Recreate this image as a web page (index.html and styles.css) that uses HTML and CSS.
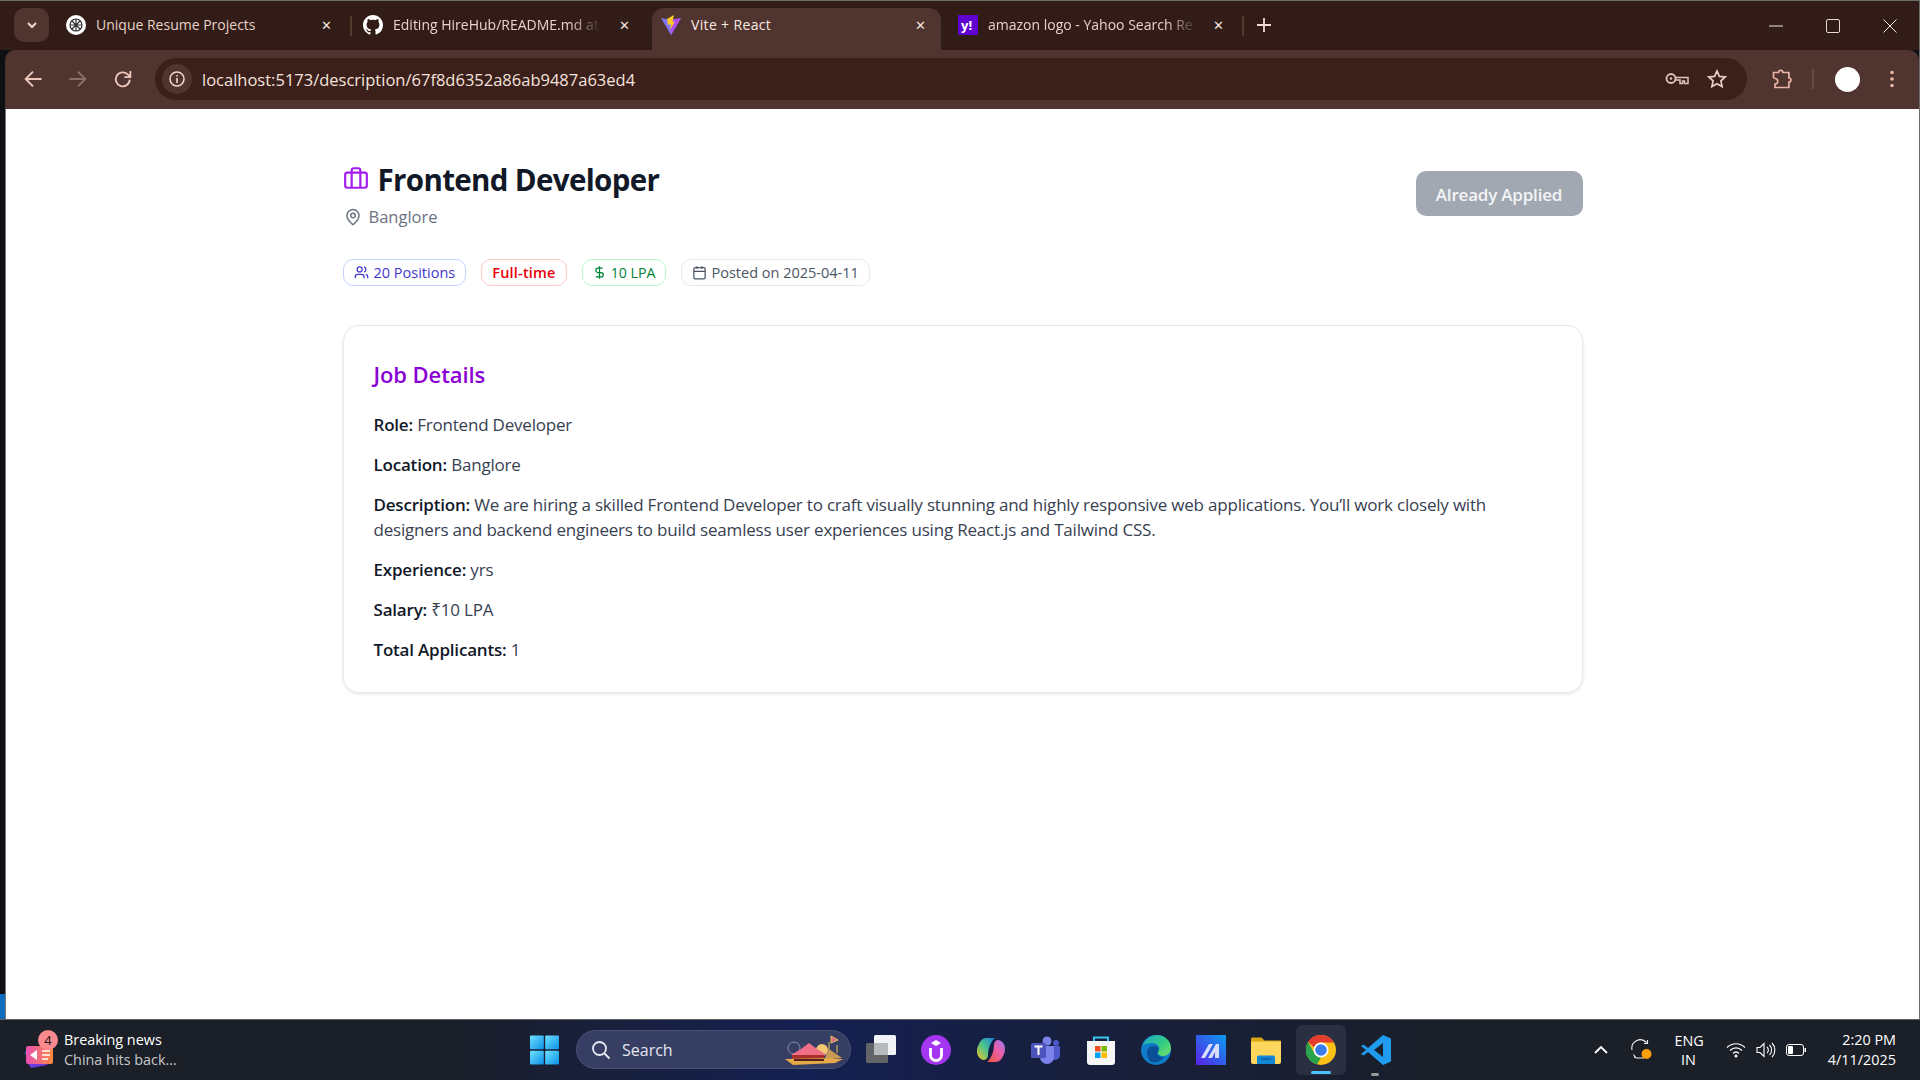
FILE: index.html
```html
<!DOCTYPE html>
<html lang="en">
<head>
<meta charset="utf-8">
<title>Vite + React</title>
<link rel="stylesheet" href="styles.css">
</head>
<body>
<div class="window">
  <header class="tabstrip">
    <button class="tab-menu"><svg width="14" height="14" viewBox="0 0 14 14"><path d="M3 5l4 4 4-4" fill="none" stroke="#f3d9d0" stroke-width="2"/></svg></button>
    <div class="tab tab-1">
      <svg class="fav" viewBox="0 0 20 20"><circle cx="10" cy="10" r="10" fill="#fff"/><g fill="none" stroke="#333" stroke-width="1.2"><circle cx="10" cy="10" r="6"/><path d="M6 6l8 8M14 6l-8 8M10 4v12M4 10h12"/></g></svg>
      <span class="tab-title">Unique Resume Projects</span>
      <span class="tab-x">✕</span>
    </div>
    <i class="tab-sep"></i>
    <div class="tab tab-2">
      <svg class="fav" viewBox="0 0 16 16"><path fill="#fff" d="M8 0C3.58 0 0 3.58 0 8c0 3.54 2.29 6.53 5.47 7.59.4.07.55-.17.55-.38 0-.19-.01-.82-.01-1.49-2.01.37-2.53-.49-2.69-.94-.09-.23-.48-.94-.82-1.13-.28-.15-.68-.52-.01-.53.63-.01 1.08.58 1.23.82.72 1.21 1.87.87 2.33.66.07-.52.28-.87.51-1.07-1.78-.2-3.64-.89-3.64-3.95 0-.87.31-1.59.82-2.15-.08-.2-.36-1.02.08-2.12 0 0 .67-.21 2.2.82.64-.18 1.32-.27 2-.27s1.36.09 2 .27c1.53-1.04 2.2-.82 2.2-.82.44 1.1.16 1.92.08 2.12.51.56.82 1.27.82 2.15 0 3.07-1.87 3.75-3.65 3.95.29.25.54.73.54 1.48 0 1.07-.01 1.93-.01 2.2 0 .21.15.46.55.38A8.01 8.01 0 0 0 16 8c0-4.42-3.58-8-8-8z"/></svg>
      <span class="tab-title fade">Editing HireHub/README.md at</span>
      <span class="tab-x">✕</span>
    </div>
    <div class="tab tab-active">
      <svg class="fav" viewBox="0 0 20 20"><path fill="#7f78f6" d="M0 3l10 2 10-2-10 17z"/><path fill="#b14cf0" d="M10 5l10-2-10 17z"/><path fill="#ffc927" d="M6 4l7-4-1.500 7L14 6.500 9 15l1-6-3 1z"/></svg>
      <span class="tab-title">Vite + React</span>
      <span class="tab-x">✕</span>
    </div>
    <div class="tab tab-4">
      <svg class="fav" viewBox="0 0 20 20"><rect width="20" height="20" fill="#5f01d1"/><text x="3" y="14.500" class="yahoo">y!</text></svg>
      <span class="tab-title fade">amazon logo - Yahoo Search Re</span>
      <span class="tab-x">✕</span>
    </div>
    <i class="tab-sep sep-last"></i>
    <svg class="plus" width="16" height="16" viewBox="0 0 16 16"><path d="M8 1v14M1 8h14" stroke="#f3d9d0" stroke-width="1.800"/></svg>
    <div class="win-ctrl">
      <svg width="14" height="14" viewBox="0 0 14 14"><path d="M0 7h14" stroke="#f5ebe6" stroke-width="1"/></svg>
      <svg width="14" height="14" viewBox="0 0 14 14"><rect x=".5" y=".5" width="13" height="13" rx="1.500" fill="none" stroke="#e7d8d2"/></svg>
      <svg width="14" height="14" viewBox="0 0 14 14"><path d="M.5.500l13 13M13.500.500l-13 13" stroke="#f5ebe6"/></svg>
    </div>
  </header>

  <nav class="toolbar">
    <svg class="nav-ic" viewBox="0 0 18 18"><path d="M16 9H3M9 3L3 9l6 6" fill="none" stroke="#ecc8bc" stroke-width="1.600"/></svg>
    <svg class="nav-ic nav-off" viewBox="0 0 18 18"><path d="M2 9h13M9 3l6 6-6 6" fill="none" stroke="#8c6e66" stroke-width="1.600"/></svg>
    <svg class="nav-ic" viewBox="0 0 18 18"><path d="M14.500 9.500a5.700 5.700 0 1 1-1.700-4.300L15 7.200M15 2.500v4.900h-4.900" fill="none" stroke="#ecc8bc" stroke-width="1.500"/></svg>
    <div class="omnibox">
      <span class="site-info"><svg width="18" height="18" viewBox="0 0 18 18"><circle cx="9" cy="9" r="7" fill="none" stroke="#f3d9d0" stroke-width="1.500"/><path d="M9 8v5M9 5v1.600" stroke="#f3d9d0" stroke-width="1.600"/></svg></span>
      <span class="url">localhost:5173/description/67f8d6352a86ab9487a63ed4</span>
      <svg class="omni-key" width="24" height="14" viewBox="0 0 24 14"><circle cx="6" cy="6.500" r="4.500" fill="none" stroke="#ddc5bc" stroke-width="1.800"/><circle cx="6" cy="6.500" r="1.300" fill="#ddc5bc"/><path d="M10.500 5.500H23v6h-3.500V9h-2v2.500H15V8h-4.500" fill="none" stroke="#ddc5bc" stroke-width="1.500"/></svg>
      <svg class="omni-star" width="20" height="20" viewBox="0 0 20 20"><path d="M10 2l2.400 5.400 5.800.600-4.300 3.900 1.200 5.700L10 14.700l-5.100 2.900 1.200-5.700L1.800 8l5.800-.6z" fill="none" stroke="#e6d0c7" stroke-width="1.700"/></svg>
    </div>
    <svg class="ext" width="20" height="20" viewBox="0 0 20 20"><path d="M1.500 3.500h5a2.200 2.200 0 0 1 4.400 0h6v5.500a2 2 0 0 1 0 4v5.500H3v-3.500a2.500 2.500 0 0 0 0-5.500l-1.500-1z" fill="none" stroke="#e9b4a6" stroke-width="1.700"/></svg>
    <i class="tool-sep"></i>
    <span class="avatar"></span>
    <svg class="dots" width="6" height="18" viewBox="0 0 6 18"><circle cx="3" cy="2.500" r="1.800" fill="#e9b4a6"/><circle cx="3" cy="9" r="1.800" fill="#e9b4a6"/><circle cx="3" cy="15.500" r="1.800" fill="#e9b4a6"/></svg>
  </nav>

  <main class="page">
    <div class="container">
      <div class="head">
        <div>
          <h1 class="title">
            <svg class="brief" width="26" height="26" viewBox="0 0 24 24"><path d="M8 21V5a2 2 0 0 1 2-2h4a2 2 0 0 1 2 2v16" fill="none" stroke="#a21ff0" stroke-width="2"/><rect x="2" y="7" width="20" height="14" rx="2" fill="none" stroke="#a21ff0" stroke-width="2"/></svg>
            Frontend Developer
          </h1>
          <p class="loc"><svg width="18" height="18" viewBox="0 0 24 24"><path d="M20 10c0 5-5.500 10.200-7.400 11.800a1 1 0 0 1-1.200 0C9.500 20.200 4 15 4 10a8 8 0 0 1 16 0" fill="none" stroke="#6b7280" stroke-width="2"/><circle cx="12" cy="10" r="3" fill="none" stroke="#6b7280" stroke-width="2"/></svg>Banglore</p>
        </div>
        <button class="applied">Already Applied</button>
      </div>
      <div class="chips">
        <span class="chip chip-blue"><svg width="15" height="15" viewBox="0 0 24 24"><g fill="none" stroke="currentColor" stroke-width="2"><path d="M16 21v-2a4 4 0 0 0-4-4H6a4 4 0 0 0-4 4v2"/><circle cx="9" cy="7" r="4"/><path d="M22 21v-2a4 4 0 0 0-3-3.870M16 3.130a4 4 0 0 1 0 7.750"/></g></svg>20 Positions</span>
        <span class="chip chip-red">Full-time</span>
        <span class="chip chip-green"><svg width="15" height="15" viewBox="0 0 24 24"><path d="M12 2v20M17 5H9.500a3.500 3.500 0 0 0 0 7h5a3.500 3.500 0 0 1 0 7H6" fill="none" stroke="currentColor" stroke-width="2"/></svg>10 LPA</span>
        <span class="chip chip-gray"><svg width="15" height="15" viewBox="0 0 24 24"><g fill="none" stroke="currentColor" stroke-width="2"><path d="M8 2v4M16 2v4M3 10h18"/><rect x="3" y="4" width="18" height="18" rx="2"/></g></svg>Posted on 2025-04-11</span>
      </div>
      <section class="card">
        <h2 class="card-title">Job Details</h2>
        <p><b>Role:</b> Frontend Developer</p>
        <p><b>Location:</b> Banglore</p>
        <p><b>Description:</b> We are hiring a skilled Frontend Developer to craft visually stunning and highly responsive web applications. You’ll work closely with designers and backend engineers to build seamless user experiences using React.js and Tailwind CSS.</p>
        <p><b>Experience:</b> yrs</p>
        <p><b>Salary:</b> ₹10 LPA</p>
        <p><b>Total Applicants:</b> 1</p>
      </section>
    </div>
  </main>

  <footer class="taskbar">
    <div class="news">
      <span class="news-icon">
        <svg width="30" height="30" viewBox="0 0 30 30"><path d="M2 24l24-2-4 5-16 3z" fill="#6e3be0"/><path d="M0 14l3-3v14z" fill="#3b6fe0"/><rect x="1" y="8" width="27" height="18" rx="2" fill="url(#ng)"/><path d="M5 17l7-5v10z" fill="#fff"/><path d="M17 13h8M17 17h8M17 21h6" stroke="#fff" stroke-width="1.500"/><defs><linearGradient id="ng" x1="0" x2="1"><stop offset="0" stop-color="#e94fb5"/><stop offset="1" stop-color="#fb8a3e"/></linearGradient></defs></svg>
        <span class="badge">4</span>
      </span>
      <div class="news-text"><div>Breaking news</div><div class="news-sub">China hits back...</div></div>
    </div>
    <div class="center">
      <svg class="ti win" viewBox="0 0 30 30"><g fill="url(#wg)"><rect width="14.300" height="14.300" rx="1"/><rect x="15.700" width="14.300" height="14.300" rx="1"/><rect y="15.700" width="14.300" height="14.300" rx="1"/><rect x="15.700" y="15.700" width="14.300" height="14.300" rx="1"/></g><defs><linearGradient id="wg" x1="0" y1="0" x2="1" y2="1"><stop offset="0" stop-color="#6fe3ff"/><stop offset="1" stop-color="#0a8fe8"/></linearGradient></defs></svg>
      <div class="search">
        <svg width="20" height="20" viewBox="0 0 20 20"><circle cx="8.500" cy="8.500" r="6.500" fill="none" stroke="#e4e7ee" stroke-width="1.800"/><path d="M13.500 13.500l5 5" stroke="#e4e7ee" stroke-width="2"/></svg>
        <span class="search-text">Search</span>
        <svg class="fair" width="58" height="34" viewBox="0 0 58 34"><circle cx="9" cy="15" r="6" fill="none" stroke="#8693ab"/><circle cx="37" cy="17" r="6" fill="#f3c873"/><path d="M46 3l7 4-7 3zM44 9v8M52 12v8" fill="#d96b8e" stroke="#e8c25a"/><path d="M6 22l10-6 8-6 8 6 10 6z" fill="#ee6f86"/><path d="M44 16l13 9H40z" fill="#c99a56"/><rect x="7" y="22" width="32" height="5" fill="#a7302b"/><path d="M0 26l46-1 12 1-8 4-42 2z" fill="#e6a94a"/><path d="M9 27h30" stroke="#54201a" stroke-width="2"/></svg>
      </div>
      <svg class="ti tv" viewBox="0 0 30 30"><rect x="8" width="22" height="20" rx="1.500" fill="#f2f3f6"/><rect y="8" width="22" height="20" rx="1.500" fill="#6b6b6b" fill-opacity=".9"/><rect x="8" y="8" width="14" height="12" fill="#b8b9bd"/></svg>
      <svg class="ti" viewBox="0 0 30 30"><circle cx="15" cy="15" r="15" fill="#a435f0"/><path d="M9.500 13v7a5.500 5.500 0 0 0 11 0v-7" fill="none" stroke="#fff" stroke-width="2.800"/><path d="M15 5l5 3-5 3-5-3z" fill="#fff"/></svg>
      <svg class="ti" viewBox="0 0 30 30"><path d="M10 3h9c-4 3-7 10-7 18-1 4-4 5-7 3C0 21 0 14 3 9c1-3 4-6 7-6z" fill="url(#c1)"/><path d="M20 27h-9c4-3 7-10 7-18 1-4 4-5 7-3 5 3 5 10 2 15-1 3-4 6-7 6z" fill="url(#c2)"/><defs><linearGradient id="c1" x1="0" y1="1" x2="1" y2="0"><stop offset="0" stop-color="#f7c325"/><stop offset=".5" stop-color="#4bc48c"/><stop offset="1" stop-color="#1a7ee0"/></linearGradient><linearGradient id="c2" x1="0" y1="1" x2="1" y2="0"><stop offset="0" stop-color="#f0553a"/><stop offset=".6" stop-color="#ea5fb0"/><stop offset="1" stop-color="#8f7cf0"/></linearGradient></defs></svg>
      <svg class="ti" viewBox="0 0 30 30"><circle cx="16" cy="6" r="4.500" fill="#7b83eb"/><circle cx="25" cy="8" r="3" fill="#5059c9"/><path d="M20 11h9v9a5 5 0 0 1-5 5h-4z" fill="#5059c9"/><path d="M8 11h15v11a7 7 0 0 1-14 0z" fill="#7b83eb"/><rect y="8" width="15" height="15" rx="1.500" fill="#4b53bc"/><path d="M3.500 11.500h8M7.500 11.500V20" stroke="#fff" stroke-width="2"/></svg>
      <svg class="ti" viewBox="0 0 30 30"><path d="M8 7V2.500h14V7" fill="none" stroke="#3cc3ee" stroke-width="2"/><path d="M1 6h28v21a3 3 0 0 1-3 3H4a3 3 0 0 1-3-3z" fill="#f6f6f6"/><rect x="9" y="11" width="5.500" height="5.500" fill="#f25022"/><rect x="15.500" y="11" width="5.500" height="5.500" fill="#7fba00"/><rect x="9" y="17.500" width="5.500" height="5.500" fill="#00a4ef"/><rect x="15.500" y="17.500" width="5.500" height="5.500" fill="#ffb900"/></svg>
      <svg class="ti" viewBox="0 0 30 30"><circle cx="15" cy="15" r="15" fill="#0f7cc9"/><path d="M2 10C5 3 11 0 16 0c8 0 14 6 14 13 0 5-4 8-8 8-3 0-6-2-5-4 1-2 2-3 1-5-1-3-4-4-7-4-4 0-7 1-9 2z" fill="url(#eg)"/><path d="M6 18c0-5 4-8 9-7 3 1 3 4 2 6-2 3 2 6 6 5-3 5-10 7-14 4-2-2-3-5-3-8z" fill="#0b4f96"/><defs><linearGradient id="eg" x1="0" y1="0" x2="1" y2="1"><stop offset="0" stop-color="#1aa6c9"/><stop offset=".6" stop-color="#37d07d"/><stop offset="1" stop-color="#7fe06a"/></linearGradient></defs></svg>
      <svg class="ti" viewBox="0 0 30 30"><rect width="30" height="30" fill="url(#mg)"/><path d="M5 23L13 9h4L9 23zM12 23L20 9h3v14h-4v-6l-3 6z" fill="#d8dcfb"/><defs><linearGradient id="mg" x1="0" y1="1" x2="1" y2="0"><stop offset="0" stop-color="#5a22e6"/><stop offset="1" stop-color="#0a9bf0"/></linearGradient></defs></svg>
      <svg class="ti" viewBox="0 0 30 30"><path d="M0 4a1.500 1.500 0 0 1 1.500-1.500h9l3 3H29a1 1 0 0 1 1 1V10H0z" fill="#d9a513"/><path d="M0 6.500h30V27a2 2 0 0 1-2 2H2a2 2 0 0 1-2-2z" fill="#fdd75c"/><path d="M6 22a1.500 1.500 0 0 1 1.500-1.500h15A1.500 1.500 0 0 1 24 22v7H6z" fill="#1287d8"/><path d="M10 24h10" stroke="#0b5fa5" stroke-width="1.500"/></svg>
      <div class="active-app">
        <svg class="ti" viewBox="0 0 30 30"><circle cx="15" cy="15" r="15" fill="#fbc116"/><path d="M15 0a15 15 0 0 1 13 7.500H15a7.500 7.500 0 0 0-7 4.700L2 7A15 15 0 0 1 15 0z" fill="#e33b2e"/><path d="M2 7l6.500 11.300A7.500 7.500 0 0 0 15 22.500L11 29.500A15 15 0 0 1 2 7z" fill="#2ba24c"/><circle cx="15" cy="15" r="7.500" fill="#fff"/><circle cx="15" cy="15" r="5.800" fill="#3b7de8"/></svg>
        <i class="run-bar"></i>
      </div>
      <div class="vsc">
        <svg class="ti" viewBox="0 0 30 30"><path d="M22 0l8 3.500v23L22 30 7 17l-4.500 3.500L0 19l5-4-5-4 2.500-1.500L7 13z" fill="#1f9cf0"/><path d="M22 8l-9 7 9 7z" fill="#1a2030"/></svg>
        <i class="run-dot"></i>
      </div>
    </div>
    <div class="tray">
      <svg width="14" height="8" viewBox="0 0 14 8"><path d="M1 7l6-6 6 6" fill="none" stroke="#fff" stroke-width="1.800"/></svg>
      <svg class="sync" width="22" height="22" viewBox="0 0 22 22"><path d="M1 11A8.500 8.500 0 0 1 15.500 3.500M16.500 1v3.500H13M3 18l2 0.500M2.500 15.500L5 19h8" fill="none" stroke="#f2f2f2" stroke-width="1.100"/><circle cx="15.500" cy="15" r="5" fill="#ff9f0a"/></svg>
      <div class="lang"><div>ENG</div><div>IN</div></div>
      <svg width="20" height="16" viewBox="0 0 20 16"><path d="M1 5.500c5-5 13-5 18 0M4 8.500c3.500-3.500 8.500-3.500 12 0M7 11.500c2-2 4-2 6 0" fill="none" stroke="#fff" stroke-width="1.200"/><circle cx="10" cy="14" r="1.500" fill="#fff"/></svg>
      <svg width="20" height="16" viewBox="0 0 20 16"><path d="M1 5.500h3l4-4v13l-4-4H1z" fill="none" stroke="#fff" stroke-width="1.100"/><path d="M11 5a4 4 0 0 1 0 6M13.500 3a7 7 0 0 1 0 10M16 1a10 10 0 0 1 0 14" fill="none" stroke="#fff" stroke-width="1.100"/></svg>
      <svg width="20" height="12" viewBox="0 0 20 12"><rect x=".5" y=".5" width="17" height="11" rx="2.500" fill="none" stroke="#fff"/><rect x="2" y="2" width="5" height="8" rx="1" fill="#fff"/><rect x="18.500" y="4" width="1.500" height="4" fill="#fff"/></svg>
      <div class="clock"><div>2:20 PM</div><div>4/11/2025</div></div>
    </div>
  </footer>
</div>
</body>
</html>
```

FILE: styles.css
```css
* { box-sizing: border-box; }
html, body { margin: 0; height: 100%; }
body { font-family: "Open Sans", "Noto Sans", sans-serif; background: #311c17; overflow: hidden; }
.window { height: 1080px; display: flex; flex-direction: column; border-top: 1px solid #6c6c6c; border-right: 1px solid #6c6c6c; background: linear-gradient(180deg, #0e1014 0, #0e1014 92%, #0e6cc0 92%, #0e6cc0 100%); }

.tabstrip { height: 49px; flex: none; display: flex; align-items: flex-end; background: #311c17; color: #e8d2ca; font-size: 14px; padding-left: 14px; }
.tab-menu { width: 35px; height: 34px; margin-bottom: 8px; border: 0; border-radius: 10px; background: #50342f; padding: 0; display: flex; align-items: center; justify-content: center; margin-right: 7px; flex: none; }
.tab { height: 42px; display: flex; align-items: center; padding-bottom: 9px; flex: none; }
.fav { width: 20px; height: 20px; flex: none; }
.tab-title { margin-left: 10px; white-space: nowrap; overflow: hidden; }
.fade { -webkit-mask-image: linear-gradient(90deg, #000 85%, transparent); mask-image: linear-gradient(90deg, #000 85%, transparent); }
.tab-x { font-size: 13px; margin-left: auto; color: #f3e3dc; }
.tab-1 { width: 294px; padding-left: 10px; padding-right: 18px; }
.tab-sep { width: 2px; height: 20px; margin-bottom: 14px; background: #54392f; flex: none; }
.tab-2 { width: 300px; padding-left: 11px; padding-right: 22px; }
.tab-2 .tab-title { width: 208px; }
.tab-active { width: 289px; background: #50342f; border-radius: 12px 12px 0 0; padding-left: 9px; padding-right: 15px; color: #f8e9e3; }
.tab-active .tab-title { letter-spacing: .35px; }
.tab-4 { width: 301px; padding-left: 17px; padding-right: 18px; }
.tab-4 .tab-title { width: 210px; }
.plus { margin: 0 0 17px 12px; }
.win-ctrl { margin-left: auto; display: flex; gap: 43px; margin-right: 22px; margin-bottom: 17px; }

.toolbar { height: 59px; flex: none; margin-left: 5px; padding: 0 0 1px 17px; background: #50342f; border-radius: 10px 10px 0 0; display: flex; align-items: center; }
.nav-ic { width: 22px; height: 22px; flex: none; margin-right: 23px; }
.nav-ic:nth-child(3) { margin-right: 21px; }
.omnibox { width: 1592px; height: 42px; border-radius: 21px; background: #3a1f1a; display: flex; align-items: center; padding-left: 7px; }
.site-info { width: 30px; height: 30px; border-radius: 50%; background: #50342f; display: flex; align-items: center; justify-content: center; flex: none; }
.url { margin-left: 10px; color: #f5e3dc; font-size: 16.5px; }
.omni-key { margin-left: auto; }
.omni-star { margin: 0 20px 0 18px; }
.ext { margin-left: 25px; flex: none; }
.tool-sep { width: 2px; height: 20px; background: #6a4a42; margin-left: 20px; flex: none; }
.avatar { width: 25px; height: 25px; border-radius: 50%; background: #fff; margin-left: 21px; flex: none; }
.dots { margin-left: 29px; flex: none; }

.page { flex: 1; min-height: 0; margin-left: 5px; border-left: 1px solid #7a7a7a; background: #fff; color: #111827; }
.container { width: 1240px; margin: 0 auto; padding-top: 53px; }
.head { display: flex; justify-content: space-between; align-items: flex-start; }
.title { display: flex; align-items: center; gap: 9px; margin: 0; font-size: 29.5px; line-height: 36px; font-weight: 700; letter-spacing: -.65px; }
.brief { margin-top: -5px; }
.loc { display: flex; align-items: center; gap: 7px; margin: 7px 0 0; padding-left: 1px; font-size: 16.5px; line-height: 24px; color: #6b7280; }
.applied { margin-top: 9px; width: 167px; height: 45px; padding: 1px 0 0; border: 0; border-radius: 10px; background: #a2a8b1; color: #f3f4f6; font: 600 17px "Open Sans", sans-serif; letter-spacing: -.2px; }
.chips { display: flex; gap: 15px; margin-top: 30px; }
.chip { height: 27px; display: flex; align-items: center; gap: 5px; padding: 0 10px; border: 1px solid; border-radius: 10px; font-size: 14.5px; font-weight: 500; }
.chip-blue { color: #4338ca; border-color: #c7d2fe; }
.chip-red { color: #e7000b; border-color: #fecaca; font-weight: 600; letter-spacing: .2px; }
.chip-green { color: #008236; border-color: #bbf7d0; gap: 4px; padding: 0 9px; font-size: 14.2px; }
.chip-gray { color: #4b5563; border-color: #e5e7eb; }
.card { margin-top: 39px; height: 368px; padding: 32px 30px 0; border: 1px solid #e8e9ec; border-radius: 16px; box-shadow: 0 1px 3px rgba(0,0,0,.12); }
.card-title { margin: 0 0 21.500px; font-size: 22px; line-height: 32px; font-weight: 600; letter-spacing: -.1px; color: #8a00d4; }
.card p { margin: 0 0 15px; font-size: 17px; line-height: 25px; color: #374151; letter-spacing: -.2px; }
.card b { font-weight: 600; color: #111827; }

.taskbar { height: 61px; flex: none; margin-right: -1px; padding-bottom: 1px; display: flex; align-items: center; border-top: 1px solid #5f5f5f; background: linear-gradient(90deg, #1b1f27 0%, #1b1f27 22%, #142052 42%, #171f3e 55%, #1b1f27 78%, #1b1f27 100%); color: #fff; font-size: 14.4px; }
.news { width: 530px; flex: none; display: flex; align-items: center; padding-left: 25px; gap: 9px; }
.news-icon { position: relative; width: 30px; height: 30px; flex: none; margin-top: 6px; }
.badge { position: absolute; left: 13px; top: -8px; width: 20px; height: 20px; border-radius: 50%; background: #f98a8f; color: #111; font-size: 13px; line-height: 20px; text-align: center; }
.news-text { line-height: 20px; }
.news-sub { color: #c5c7cc; }
.center { display: flex; align-items: center; gap: 25px; }
.ti { width: 30px; height: 30px; flex: none; display: block; }
.win { width: 29px; margin-right: -8px; }
.search { width: 275px; height: 39px; border-radius: 20px; background: #373e64; border: 1px solid #4a5175; display: flex; align-items: center; padding-left: 14px; color: #e4e7ee; font-size: 16px; margin-right: -10px; }
.search-text { margin-left: 11px; }
.fair { margin-left: auto; margin-right: 7px; }
.active-app { width: 50px; height: 50px; margin: 0 -10px; border-radius: 6px; background: #2a2f42; display: flex; align-items: center; justify-content: center; position: relative; }
.run-bar { position: absolute; left: 15px; bottom: 1px; width: 20px; height: 3px; border-radius: 2px; background: #4cc2ff; }
.vsc { position: relative; }
.run-dot { position: absolute; left: 10px; bottom: -11px; width: 8px; height: 3px; border-radius: 2px; background: #9a9a9a; }
.tray { margin-left: auto; display: flex; align-items: center; padding-right: 24px; }
.tray > svg { flex: none; }
.lang { width: 28px; margin: 0 23.500px 0 21.500px; text-align: center; line-height: 19px; white-space: nowrap; }
.tray > svg + svg { margin-left: 10px; }
.tray > svg:first-child + svg { margin-left: 23px; }
.clock { margin-left: 20px; width: 70px; text-align: right; line-height: 20px; white-space: nowrap; }
.yahoo { font: 700 13px "Open Sans", sans-serif; fill: #fff; }
```
